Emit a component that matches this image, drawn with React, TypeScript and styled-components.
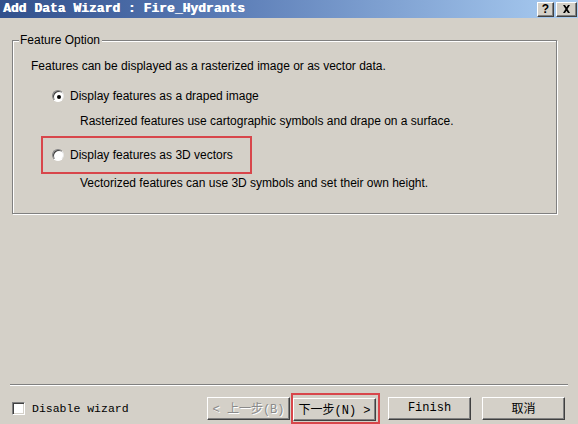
import styled, { createGlobalStyle } from 'styled-components'

const GlobalStyle = createGlobalStyle`
	html,
	body {
		margin: 0;
		padding: 0;
		background: #d4d0c8;
	}
	* {
		box-sizing: border-box;
	}
`

const SANS = `"Liberation Sans", Arial, sans-serif`
const MONO = `"Liberation Mono", "Courier New", monospace`
const CJK = `"Liberation Mono", "Noto Sans CJK SC", monospace`

const WindowStyled = styled.div`
	width: 578px;
	height: 424px;
	display: flex;
	flex-direction: column;
	background: #d4d0c8;
	overflow: hidden;
`

const TitleBarStyled = styled.div`
	height: 18px;
	flex-shrink: 0;
	display: flex;
	align-items: center;
	justify-content: space-between;
	padding: 0 1px 0 3px;
	background: linear-gradient(90deg, #31508c 0%, #5677b2 35%, #aacdf2 100%);
`

const TitleTextStyled = styled.span`
	font-family: ${MONO};
	font-size: 13px;
	font-weight: 700;
	color: #fff;
	line-height: 18px;
	white-space: pre;
	text-shadow: 0.5px 0 0 #fff;
`

const TitleButtonsStyled = styled.div`
	display: flex;
	gap: 2px;
`

const TitleButtonStyled = styled.div<{ $wide?: boolean }>`
	width: ${({ $wide }): string => ($wide ? `21px` : `17px`)};
	height: 15px;
	display: flex;
	align-items: center;
	justify-content: center;
	background: #d4d0c8;
	border: 1px solid;
	border-color: #fff #404040 #404040 #fff;
	box-shadow: inset -1px -1px 0 #808080;
	font-family: ${SANS};
	font-size: 12px;
	font-weight: 700;
	color: #000;
	line-height: 1;
`

const MainStyled = styled.div`
	flex: 1;
	padding: 15px 0 0 12px;
`

const GroupBoxStyled = styled.fieldset`
	margin: 0;
	width: 545px;
	min-width: 0;
	padding: 0 0 22px 0;
	border: 1px solid #808080;
	box-shadow: 1px 1px 0 #fff, inset 1px 1px 0 #fff;
	display: flex;
	flex-direction: column;
	align-items: flex-start;
`

const LegendStyled = styled.legend`
	margin-left: 6px;
	padding: 0 2px 0 1px;
	background: #d4d0c8;
	font-family: ${SANS};
	font-size: 12px;
	line-height: 14px;
	color: #000;
`

const TextStyled = styled.div<{ $indent: number; $top: number }>`
	margin-left: ${({ $indent }): number => $indent}px;
	margin-top: ${({ $top }): number => $top}px;
	font-family: ${SANS};
	font-size: 12px;
	line-height: 16px;
	color: #000;
	white-space: nowrap;
`

const OptionRowStyled = styled.div`
	display: flex;
	align-items: center;
	gap: 6px;
	height: 16px;
	font-family: ${SANS};
	font-size: 12px;
	color: #000;
	white-space: nowrap;
`

const PlainOptionStyled = styled.div`
	margin: 14px 0 0 39px;
`

const HighlightStyled = styled.div`
	margin: 7px 0 0 28px;
	width: 211px;
	height: 38px;
	padding: 9px 0 0 9px;
	border: 2px solid #d8464b;
`

const RadioStyled = styled.span<{ $checked: boolean }>`
	width: 12px;
	height: 12px;
	border-radius: 50%;
	background: #fff;
	border: 1px solid;
	border-color: #808080 #e8e8e8 #fff #808080;
	box-shadow: inset 1px 1px 0 #404040;
	display: flex;
	align-items: center;
	justify-content: center;

	&::after {
		content: '';
		width: 4px;
		height: 4px;
		border-radius: 50%;
		background: ${({ $checked }): string => ($checked ? `#000` : `transparent`)};
		margin: 1px 0 0 1px;
	}
`

const SeparatorStyled = styled.div`
	margin: 0 10px;
	height: 2px;
	border-top: 1px solid #808080;
	border-bottom: 1px solid #fff;
	flex-shrink: 0;
`

const FooterStyled = styled.div`
	height: 38px;
	flex-shrink: 0;
	display: flex;
	align-items: center;
	padding: 6px 13px 0 12px;
`

const CheckLabelStyled = styled.div`
	display: flex;
	align-items: center;
	gap: 7px;
	font-family: ${MONO};
	font-size: 11.5px;
	color: #000;
	flex: 1;
`

const CheckboxStyled = styled.span`
	width: 13px;
	height: 13px;
	background: #fff;
	border: 1px solid;
	border-color: #808080 #fff #fff #808080;
	box-shadow: inset 1px 1px 0 #404040, inset -1px -1px 0 #d4d0c8;
`

const ButtonStyled = styled.button<{ $disabled?: boolean; $cjk?: boolean; $gap?: number }>`
	width: 83px;
	height: 23px;
	padding: 0;
	margin-left: ${({ $gap }): number => $gap ?? 0}px;
	background: #d4d0c8;
	border: 1px solid;
	border-color: #fff #404040 #404040 #fff;
	box-shadow: inset -1px -1px 0 #808080;
	font-family: ${({ $cjk }): string => ($cjk ? CJK : MONO)};
	font-size: 12px;
	color: ${({ $disabled }): string => ($disabled ? `#8a8a8a` : `#000`)};
	text-shadow: ${({ $disabled }): string => ($disabled ? `1px 1px 0 #fff` : `none`)};
	white-space: pre;
	cursor: default;
`

const NextWrapStyled = styled.div`
	margin-left: 1px;
	padding: 3px 2px 0 0;
	height: 31px;
	border: 2px solid #d8464b;
`

const Radio = ({ checked }: { checked: boolean }): React.ReactElement => <RadioStyled $checked={checked} />

export default function App(): React.ReactElement {
	return (
		<>
			<GlobalStyle />
			<WindowStyled>
				<TitleBarStyled>
					<TitleTextStyled>Add Data Wizard : Fire_Hydrants</TitleTextStyled>
					<TitleButtonsStyled>
						<TitleButtonStyled>?</TitleButtonStyled>
						<TitleButtonStyled $wide>
							<svg width="9" height="8" viewBox="0 0 9 8">
								<path d="M1 0h2l1.5 2.3L6 0h2L5.5 4 8 8H6L4.5 5.7 3 8H1l2.5-4z" fill="#000" />
							</svg>
						</TitleButtonStyled>
					</TitleButtonsStyled>
				</TitleBarStyled>

				<MainStyled>
					<GroupBoxStyled>
						<LegendStyled>Feature Option</LegendStyled>
						<TextStyled $indent={18} $top={11}>
							Features can be displayed as a rasterized image or as vector data.
						</TextStyled>
						<PlainOptionStyled>
							<OptionRowStyled>
								<Radio checked />
								Display features as a draped image
							</OptionRowStyled>
						</PlainOptionStyled>
						<TextStyled $indent={67} $top={9}>
							Rasterized features use cartographic symbols and drape on a surface.
						</TextStyled>
						<HighlightStyled>
							<OptionRowStyled>
								<Radio checked={false} />
								Display features as 3D vectors
							</OptionRowStyled>
						</HighlightStyled>
						<TextStyled $indent={67} $top={1}>
							Vectorized features can use 3D symbols and set their own height.
						</TextStyled>
					</GroupBoxStyled>
				</MainStyled>

				<SeparatorStyled />

				<FooterStyled>
					<CheckLabelStyled>
						<CheckboxStyled />
						Disable wizard
					</CheckLabelStyled>
					<ButtonStyled $disabled $cjk>
						{`< 上一步(B)`}
					</ButtonStyled>
					<NextWrapStyled>
						<ButtonStyled $cjk>{`下一步(N) >`}</ButtonStyled>
					</NextWrapStyled>
					<ButtonStyled $gap={8}>Finish</ButtonStyled>
					<ButtonStyled $cjk $gap={11}>
						取消
					</ButtonStyled>
				</FooterStyled>
			</WindowStyled>
		</>
	)
}
